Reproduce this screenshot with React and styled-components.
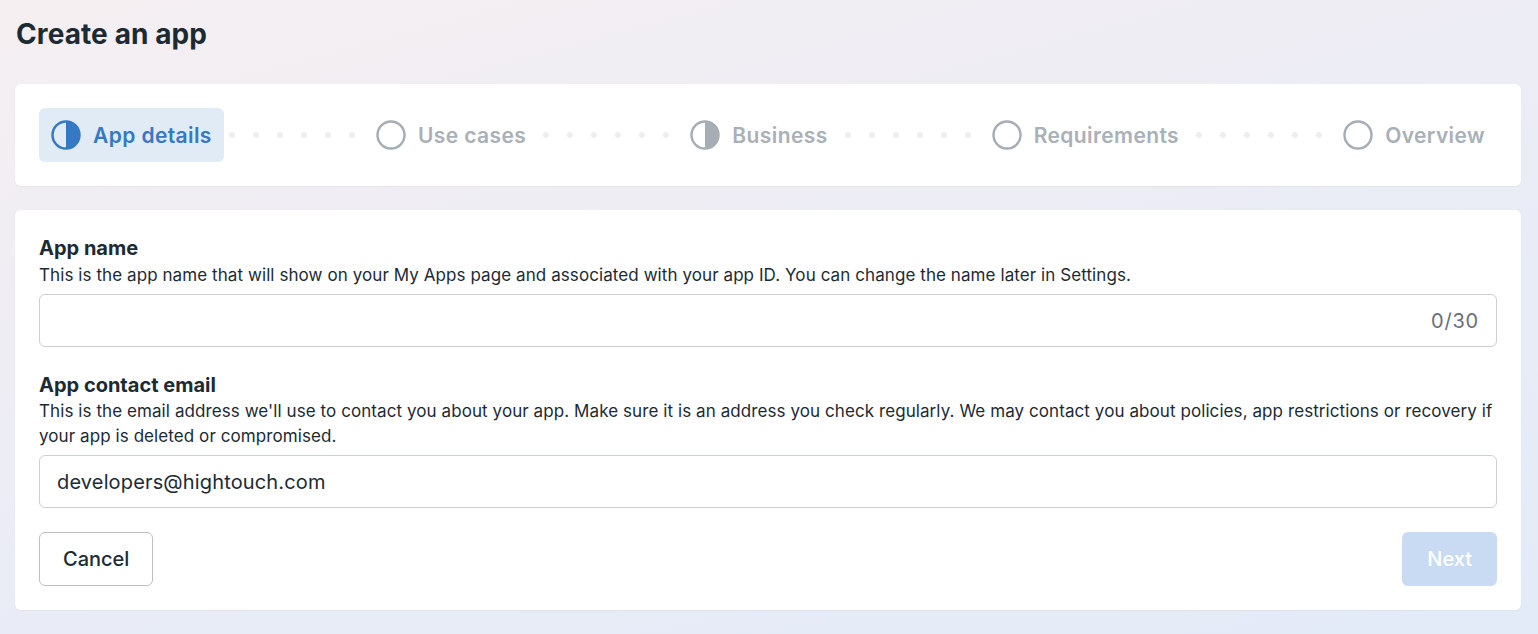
import React from "react";
import styled, { createGlobalStyle } from "styled-components";

const Global = createGlobalStyle`
  html, body { margin: 0; padding: 0; }
  body {
    font-family: Inter, "Noto Sans", sans-serif;
    color: #1c2b33;
    background: linear-gradient(165deg, #f5eff1 0%, #eeedf4 35%, #e8ecf6 65%, #e3ebf8 100%);
    min-height: 634px;
  }
  * { box-sizing: border-box; }
`;

const Page = styled.div`
  padding: 14px 17px 24px 15px;
  display: flex;
  flex-direction: column;
`;

const Title = styled.h1`
  margin: 0 0 0 1px;
  font-size: 28px;
  line-height: 40px;
  font-weight: 700;
  color: #1c2b33;
  letter-spacing: 0.1px;
`;

const Card = styled.div`
  background: #fff;
  border-radius: 6px;
  padding: 24px;
  margin-top: ${(p) => p.$mt}px;
  box-shadow: 0 1px 2px rgba(0, 0, 0, 0.04);
`;

const Stepper = styled.div`
  display: flex;
  align-items: center;
`;

const Step = styled.div`
  display: flex;
  align-items: center;
  gap: 12px;
  height: 54px;
  padding: 0 12px;
  border-radius: 6px;
  background: ${(p) => (p.$active ? "#e1ebf6" : "transparent")};
  color: ${(p) => (p.$active ? "#3578c4" : "#a9b0b7")};
  font-size: 21px;
  letter-spacing: 0.4px;
  font-weight: 600;
  white-space: nowrap;
`;

const Connector = styled.div`
  flex: 1;
  display: flex;
  justify-content: center;
  gap: 18px;
  padding-right: 4px;
`;

const Dot = styled.span`
  width: 6px;
  height: 6px;
  border-radius: 50%;
  background: #eceef1;
`;

const StepIcon = ({ kind, color }) => (
  <svg width="30" height="30" viewBox="0 0 30 30">
    <circle cx="15" cy="15" r="13.5" fill="none" stroke={color} strokeWidth="2.4" />
    {kind === "half" && <path d="M15 1.5 A13.5 13.5 0 0 1 15 28.5 Z" fill={color} />}
  </svg>
);

const Field = styled.div`
  display: flex;
  flex-direction: column;
  margin-bottom: 24px;
`;

const Label = styled.div`
  font-size: 20px;
  line-height: 28px;
  font-weight: 700;
`;

const Help = styled.div`
  font-size: 17px;
  letter-spacing: 0.08px;
  line-height: ${(p) => p.$lh}px;
  color: #1c2b33;
  margin-bottom: 6px;
`;

const InputBox = styled.div`
  display: flex;
  align-items: center;
  height: 53px;
  border: 1px solid #ccd0d5;
  border-radius: 6px;
  padding: 0 17px 0 17px;
  font-size: 20px;
`;

const InputText = styled.span`
  flex: 1;
  color: #1c2b33;
  letter-spacing: 0.15px;
`;

const Counter = styled.span`
  color: #67707a;
  font-size: 20px;
  letter-spacing: 0.8px;
`;

const Actions = styled.div`
  display: flex;
  justify-content: space-between;
`;

const Button = styled.button`
  height: 54px;
  padding: 0 ${(p) => (p.$primary ? 25 : 23)}px;
  border-radius: 6px;
  font-family: inherit;
  font-size: 20px;
  font-weight: 500;
  border: ${(p) => (p.$primary ? "none" : "1px solid #bcc0c4")};
  background: ${(p) => (p.$primary ? "#c9dbf2" : "#fff")};
  color: ${(p) => (p.$primary ? "#fff" : "#1c2b33")};
`;

const steps = [
  { label: "App details", kind: "half", active: true },
  { label: "Use cases", kind: "empty" },
  { label: "Business", kind: "half" },
  { label: "Requirements", kind: "empty" },
  { label: "Overview", kind: "empty" },
];

export default function App() {
  return (
    <>
      <Global />
      <Page>
        <Title>Create an app</Title>
        <Card $mt={30}>
          <Stepper>
            {steps.map((s, i) => (
              <React.Fragment key={s.label}>
                {i > 0 && (
                  <Connector>
                    {Array.from({ length: 6 }).map((_, j) => (
                      <Dot key={j} />
                    ))}
                  </Connector>
                )}
                <Step $active={s.active}>
                  <StepIcon kind={s.kind} color={s.active ? "#3578c4" : "#a6adb4"} />
                  {s.label}
                </Step>
              </React.Fragment>
            ))}
          </Stepper>
        </Card>
        <Card $mt={24}>
          <Field>
            <Label>App name</Label>
            <Help $lh={26}>
              This is the app name that will show on your My Apps page and associated with your app ID. You can change the name later in Settings.
            </Help>
            <InputBox>
              <InputText />
              <Counter>0/30</Counter>
            </InputBox>
          </Field>
          <Field>
            <Label>App contact email</Label>
            <Help $lh={25}>
              This is the email address we'll use to contact you about your app. Make sure it is an address you check regularly. We may contact you about policies, app restrictions or recovery if your app is deleted or compromised.
            </Help>
            <InputBox>
              <InputText>developers@hightouch.com</InputText>
            </InputBox>
          </Field>
          <Actions>
            <Button>Cancel</Button>
            <Button $primary disabled>Next</Button>
          </Actions>
        </Card>
      </Page>
    </>
  );
}
